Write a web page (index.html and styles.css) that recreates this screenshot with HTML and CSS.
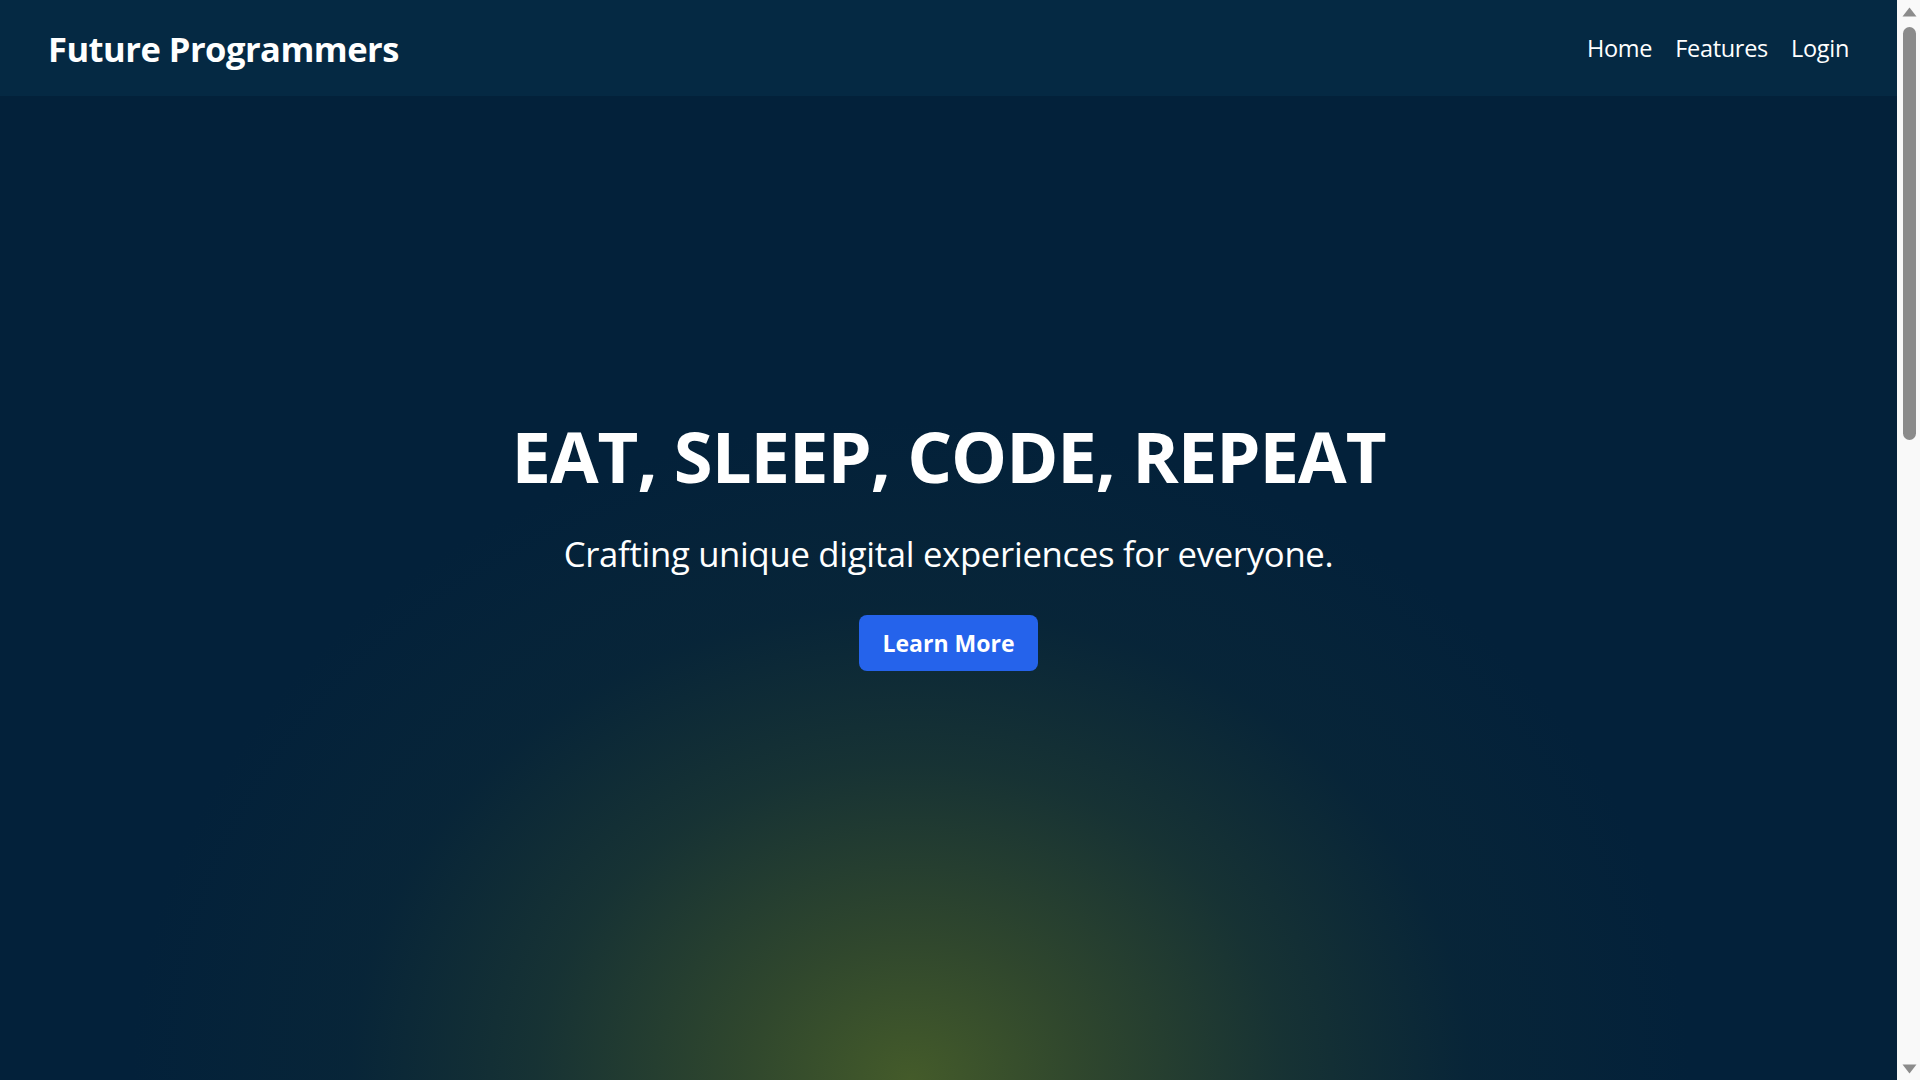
FILE: index.html
```html
<!DOCTYPE html>
<html lang="en">
<head>
<meta charset="utf-8">
<title>Future Programmers</title>
<link rel="stylesheet" href="styles.css">
</head>
<body>
<div class="page">
<header class="site-header">
  <a class="logo" href="#">Future Programmers</a>
  <nav class="nav">
    <a href="#">Home</a>
    <a href="#features">Features</a>
    <a href="#">Login</a>
  </nav>
</header>
<main>
  <section class="hero">
    <h1 class="hero-title">EAT, SLEEP, CODE, REPEAT</h1>
    <p class="hero-sub">Crafting unique digital experiences for everyone.</p>
    <a class="btn" href="#features">Learn More</a>
  </section>
  <section class="features" id="features">
    <h2 class="features-title">Features</h2>
    <div class="feature-grid">
      <div class="card"><h3>Learn</h3><p>Hands-on lessons that take you from first line to full project.</p></div>
      <div class="card"><h3>Build</h3><p>Create real applications with modern tools and frameworks.</p></div>
      <div class="card"><h3>Share</h3><p>Join a community of programmers and grow together.</p></div>
    </div>
  </section>
  <footer class="footer">© Future Programmers</footer>
</main>
</div>
<div class="scrollbar" aria-hidden="true">
  <svg class="sb-arrow" width="15" height="10" viewBox="0 0 15 10"><path d="M7.5 0.5 L14.5 9.5 L0.5 9.5 Z" fill="#8b8b8b"/></svg>
  <div class="sb-track"><div class="sb-thumb"></div></div>
  <svg class="sb-arrow" width="15" height="10" viewBox="0 0 15 10"><path d="M0.5 0.5 L14.5 0.5 L7.5 9.5 Z" fill="#8b8b8b"/></svg>
</div>
</body>
</html>
```
FILE: styles.css
```css
* { box-sizing: border-box; }
html, body { margin: 0; padding: 0; }
body {
  font-family: "Open Sans", "Noto Sans", sans-serif;
  background: #03213a;
  color: #fff;
}
a { color: inherit; text-decoration: none; }

.page { margin-right: 23px; }

.scrollbar {
  position: fixed;
  top: 0;
  right: 0;
  bottom: 0;
  width: 23px;
  background: #f9f9f9;
  display: flex;
  flex-direction: column;
  align-items: center;
  padding: 7px 0 6px 1px;
  z-index: 100;
}
.sb-arrow { display: block; flex: none; }
.sb-track {
  flex: 1;
  width: 100%;
  display: flex;
  justify-content: center;
  padding-top: 10px;
}
.sb-thumb {
  width: 13px;
  height: 413px;
  background: #8b8b8b;
  border-radius: 7px;
}

.site-header {
  position: sticky;
  top: 0;
  z-index: 10;
  height: 96px;
  margin-bottom: -96px;
  padding: 0 48px;
  display: flex;
  align-items: center;
  justify-content: space-between;
  background: #052943;
}
.logo {
  font-size: 34.5px;
  font-weight: 700;
  letter-spacing: -0.5px;
}
.nav { display: flex; gap: 23px; }
.nav a { font-size: 23.5px; letter-spacing: -0.3px; }

.hero {
  height: 100vh;
  display: flex;
  flex-direction: column;
  align-items: center;
  justify-content: center;
  text-align: center;
  padding-top: 12px;
  background:
    radial-gradient(ellipse 780px 660px at 48% 100%,
      rgba(68, 91, 42, 1) 0%,
      rgba(55, 77, 43, 0.85) 22%,
      rgba(36, 62, 48, 0.6) 48%,
      rgba(18, 46, 52, 0.3) 72%,
      rgba(3, 33, 58, 0) 100%),
    #03213a;
}
.hero-title {
  margin: 0;
  font-size: 70.5px;
  font-weight: 700;
  line-height: 1;
  letter-spacing: -1px;
}
.hero-sub {
  margin: 42px 0 0;
  font-size: 34.7px;
  line-height: 1.2;
  letter-spacing: -0.3px;
}
.btn {
  margin-top: 40px;
  display: inline-block;
  background: #2563eb;
  color: #fff;
  font-size: 23px;
  font-weight: 700;
  line-height: 32px;
  padding: 12px 24px;
  border-radius: 8px;
}

.features {
  padding: 120px 48px;
  min-height: 1300px;
  background: #03213a;
}
.features-title {
  margin: 0 0 48px;
  text-align: center;
  font-size: 48px;
}
.feature-grid {
  display: grid;
  grid-template-columns: repeat(3, 1fr);
  gap: 32px;
}
.card {
  background: #052842;
  border-radius: 12px;
  padding: 32px;
}
.card h3 { margin: 0 0 12px; font-size: 28px; }
.card p { margin: 0; font-size: 18px; line-height: 1.5; color: #cbd5e1; }
.footer {
  padding: 40px 48px;
  text-align: center;
  background: #052842;
  font-size: 18px;
}
```
